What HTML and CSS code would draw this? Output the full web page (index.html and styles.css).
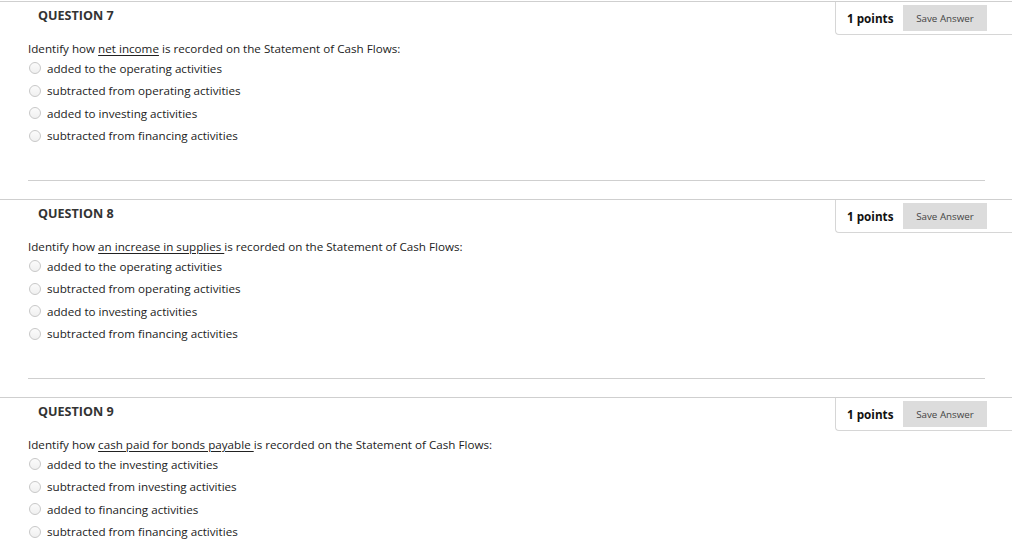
FILE: index.html
```html
<!DOCTYPE html>
<html>
<head>
<meta charset="utf-8">
<link rel="stylesheet" href="styles.css">
</head>
<body>
<div class="page">
  <section class="question">
    <div class="q-head">
      <h3 class="q-title">QUESTION 7</h3>
      <div class="points">
        <span class="pts">1 points</span>
        <button class="save">Save Answer</button>
      </div>
    </div>
    <div class="q-body">
      <p class="q-text">Identify how <u>net income</u> is recorded on the Statement of Cash Flows:</p>
      <ul class="options">
        <li class="opt"><span class="radio"></span>added to the operating activities</li>
        <li class="opt"><span class="radio"></span>subtracted from operating activities</li>
        <li class="opt"><span class="radio"></span>added to investing activities</li>
        <li class="opt"><span class="radio"></span>subtracted from financing activities</li>
      </ul>
      <div class="q-sep"></div>
    </div>
  </section>
  <section class="question">
    <div class="q-head">
      <h3 class="q-title">QUESTION 8</h3>
      <div class="points">
        <span class="pts">1 points</span>
        <button class="save">Save Answer</button>
      </div>
    </div>
    <div class="q-body">
      <p class="q-text">Identify how <u>an increase in supplies </u>is recorded on the Statement of Cash Flows:</p>
      <ul class="options">
        <li class="opt"><span class="radio"></span>added to the operating activities</li>
        <li class="opt"><span class="radio"></span>subtracted from operating activities</li>
        <li class="opt"><span class="radio"></span>added to investing activities</li>
        <li class="opt"><span class="radio"></span>subtracted from financing activities</li>
      </ul>
      <div class="q-sep"></div>
    </div>
  </section>
  <section class="question">
    <div class="q-head">
      <h3 class="q-title">QUESTION 9</h3>
      <div class="points">
        <span class="pts">1 points</span>
        <button class="save">Save Answer</button>
      </div>
    </div>
    <div class="q-body">
      <p class="q-text">Identify how <u>cash paid for bonds payable </u>is recorded on the Statement of Cash Flows:</p>
      <ul class="options">
        <li class="opt"><span class="radio"></span>added to the investing activities</li>
        <li class="opt"><span class="radio"></span>subtracted from investing activities</li>
        <li class="opt"><span class="radio"></span>added to financing activities</li>
        <li class="opt"><span class="radio"></span>subtracted from financing activities</li>
      </ul>
      <div class="q-sep"></div>
    </div>
  </section>
</div>
</body>
</html>
```

FILE: styles.css
```css
html, body {
  margin: 0;
  padding: 0;
  background: #fff;
}
body {
  font-family: "Open Sans", "Liberation Sans", sans-serif;
  color: #222;
  font-size: 11.65px;
  padding-top: 1px;
}
.page {
  width: 1012px;
}
.question {
  border-top: 1px solid #cfcfcf;
}
.q-head {
  display: flex;
  align-items: flex-start;
  height: 35px;
}
.q-title {
  margin: 0;
  padding: 5px 0 0 38px;
  font-size: 12.6px;
  line-height: 18px;
  font-weight: 700;
  color: #333;
}
.points {
  margin-left: auto;
  width: 177px;
  box-sizing: border-box;
  display: flex;
  align-items: center;
  padding: 3px 0 3px 11px;
  border-left: 1px solid #d6d6d6;
  border-bottom: 1px solid #d6d6d6;
  border-bottom-left-radius: 4px;
}
.pts {
  font-weight: 700;
  font-size: 11.7px;
  color: #111;
  width: 56px;
  margin-top: -1px;
}
.save {
  width: 84px;
  height: 26px;
  border: none;
  background: #dcdcdc;
  font-family: "Open Sans", "Liberation Sans", sans-serif;
  font-size: 9.8px;
  color: #444;
  padding: 0;
}
.q-body {
  padding: 3px 0 0 28px;
}
.q-text {
  margin: 0;
  line-height: 17px;
}
.q-text u {
  text-underline-offset: 2px;
}
.options {
  list-style: none;
  margin: 0;
  padding: 0;
}
.opt {
  display: flex;
  align-items: center;
  height: 22.5px;
  padding-left: 1px;
}
.radio {
  width: 12px;
  height: 12px;
  box-sizing: border-box;
  border: 1px solid #c8c8c8;
  border-radius: 50%;
  background: linear-gradient(#fbfbfb, #f0f0f0);
  margin-right: 6px;
  flex: none;
}
.q-sep {
  margin: 33px 27px 18px 0;
  border-top: 1px solid #cfcfcf;
}
```
